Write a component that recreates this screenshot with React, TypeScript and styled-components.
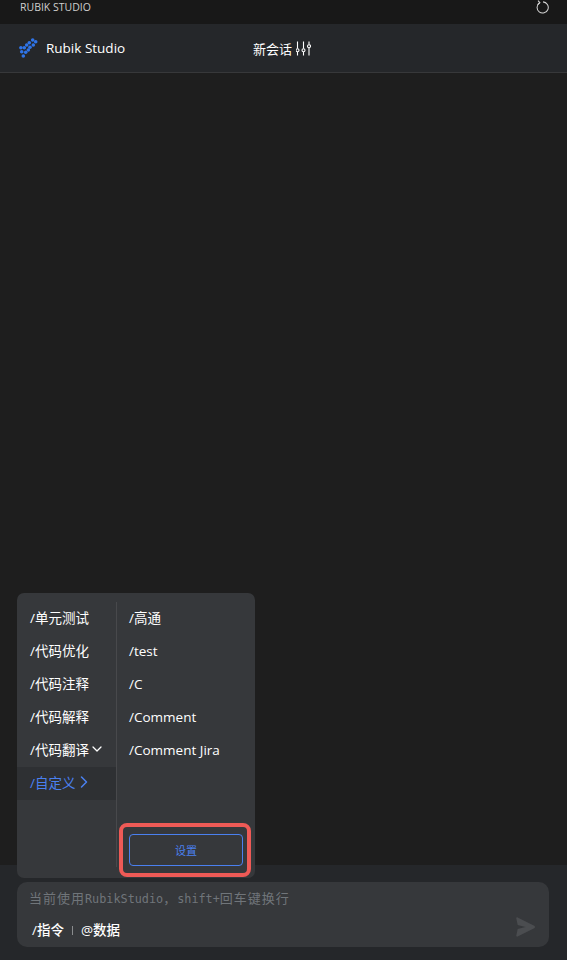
import { ChevronDown, ChevronRight } from "lucide-react";
import styled, { createGlobalStyle } from "styled-components";

const GlobalStyle = createGlobalStyle`
  html, body {
    margin: 0;
    padding: 0;
    background: #1e1e1e;
  }
  * {
    box-sizing: border-box;
  }
`;

const Page = styled.div`
  position: relative;
  display: flex;
  flex-direction: column;
  height: 960px;
  background: #1e1e1e;
  color: #fff;
  font-family: "Open Sans", "Noto Sans CJK SC", sans-serif;
  overflow: hidden;
`;

const TitleBar = styled.div`
  display: flex;
  justify-content: space-between;
  align-items: center;
  height: 24px;
  flex-shrink: 0;
  padding: 0 17px 10px 20px;
  background: #181818;
  color: #cfcfcf;
  font-size: 10.5px;
`;

const Header = styled.header`
  display: flex;
  align-items: center;
  height: 49px;
  flex-shrink: 0;
  padding-left: 19px;
  background: #25272a;
  border-bottom: 1px solid #37383a;
`;

const Brand = styled.div`
  display: flex;
  align-items: center;
  gap: 8px;
  width: 234px;
  font-size: 13.5px;
  font-weight: 500;
`;

const NewChat = styled.div`
  display: flex;
  align-items: center;
  gap: 4px;
  font-size: 13px;
`;

const Main = styled.main`
  flex: 1;
`;

const Footer = styled.footer`
  height: 95px;
  flex-shrink: 0;
  padding: 17px 18px 13px 17px;
  background: #25272a;
`;

const InputBox = styled.div`
  display: flex;
  flex-direction: column;
  justify-content: space-between;
  height: 65px;
  padding: 7px 14px 10px 12px;
  background: #36383b;
  border-radius: 10px;
`;

const Placeholder = styled.div`
  color: #70757a;
  font-size: 13px;
  letter-spacing: 1px;
  line-height: 18px;
`;

const Mono = styled.span`
  font-family: "DejaVu Sans Mono", monospace;
  font-size: 11.8px;
  letter-spacing: 0;
`;

const Actions = styled.div`
  display: flex;
  align-items: center;
  justify-content: space-between;
  padding-left: 3px;
`;

const Commands = styled.div`
  display: flex;
  align-items: center;
  padding-top: 6px;
  font-size: 13.5px;
  font-weight: 500;
  line-height: 14px;
`;

const Separator = styled.span`
  width: 1px;
  height: 9px;
  margin: 0 8px;
  background: #8a8c8e;
`;

const Popover = styled.div`
  position: absolute;
  left: 17px;
  bottom: 82px;
  display: flex;
  width: 238px;
  height: 285px;
  padding-top: 9px;
  background: #36383b;
  border-radius: 7px;
`;

const LeftColumn = styled.div`
  display: flex;
  flex-direction: column;
  width: 100px;
  height: 265px;
  border-right: 1px solid #48494c;
`;

const RightColumn = styled.div`
  display: flex;
  flex-direction: column;
  flex: 1;
  height: 275px;
`;

const MenuItem = styled.div<{ $active?: boolean }>`
  display: flex;
  align-items: center;
  gap: 2px;
  height: 33px;
  flex-shrink: 0;
  padding: 0 0 3px 13px;
  font-size: 13.5px;
  background: ${(p) => (p.$active ? "#2e3033" : "transparent")};
  color: ${(p) => (p.$active ? "#4a80f0" : "#fff")};
`;

const CustomItem = styled(MenuItem)<{ $latin?: boolean }>`
  padding: 0 0 ${(p) => (p.$latin ? "1px" : "3px")} 12px;
`;

const DownIcon = styled(ChevronDown)`
  margin-left: -2px;
`;

const RightIcon = styled(ChevronRight)`
  margin-left: -3px;
`;

const Highlight = styled.div`
  display: flex;
  align-items: center;
  width: 132px;
  height: 54px;
  margin: auto 0 0 2px;
  padding-left: 6px;
  border: 4px solid #ee5a56;
  border-radius: 8px;
`;

const SettingsButton = styled.button`
  width: 114px;
  height: 32px;
  flex-shrink: 0;
  background: transparent;
  border: 1px solid #4a80f0;
  border-radius: 4px;
  color: #4a80f0;
  font-family: inherit;
  font-size: 11px;
`;

const leftItems = ["/单元测试", "/代码优化", "/代码注释", "/代码解释"];
const customItems = ["/test", "/C", "/Comment", "/Comment Jira"];

const logoDots = [
  [13.7, 2],
  [16.7, 3.7],
  [10.3, 4.7],
  [14.3, 7],
  [7.7, 7],
  [11, 9.3],
  [1.9, 9.7],
  [5.3, 9.7],
  [9.3, 12],
  [2.7, 13.7],
  [6.7, 14.3],
  [4.3, 18],
];

function Logo() {
  return (
    <svg width="19" height="21" viewBox="0 0 19 21" fill="#2f74e8">
      {logoDots.map(([cx, cy]) => (
        <circle key={`${cx}-${cy}`} cx={cx} cy={cy} r="1.8" />
      ))}
    </svg>
  );
}

function ReloadIcon() {
  return (
    <svg width="14" height="14" viewBox="0 0 15 15" fill="none" stroke="#d4d4d4" strokeWidth="1.1">
      <path d="M3.8 3a6 6 0 1 0 3.7-1" />
      <path d="M2.2 0.6l2 2.4-2.4 2" />
    </svg>
  );
}

function SlidersIcon() {
  return (
    <svg width="15" height="15" viewBox="0 0 15 15" fill="none" stroke="#fff" strokeWidth="1.1">
      <path d="M1.5 0.5v7M1.5 11v3.5M7.5 0.5v7M7.5 11v3.5M13 0.5v3M13 7v7.5" />
      <circle cx="1.5" cy="9.2" r="1.5" />
      <circle cx="7.5" cy="9.2" r="1.5" />
      <circle cx="13" cy="5.2" r="1.5" />
    </svg>
  );
}

function SendIcon() {
  return (
    <svg width="19" height="20" viewBox="0 0 19 20" fill="#4b4d50">
      <path d="M1.6 0.5 18.2 8.7c1 .5 1 2 0 2.5L1.6 19.5c-.8.4-1.5-.2-1.3-1l1.4-6.6 7.8-1.9-7.8-1.9L.3 1.5C.1.7.8.1 1.6.5Z" />
    </svg>
  );
}

export default function App() {
  return (
    <Page>
      <GlobalStyle />
      <TitleBar>
        <span>RUBIK STUDIO</span>
        <ReloadIcon />
      </TitleBar>
      <Header>
        <Brand>
          <Logo />
          Rubik Studio
        </Brand>
        <NewChat>
          新会话
          <SlidersIcon />
        </NewChat>
      </Header>
      <Main />
      <Footer>
        <InputBox>
          <Placeholder>
            当前使用<Mono>RubikStudio</Mono>，<Mono>shift+</Mono>回车键换行
          </Placeholder>
          <Actions>
            <Commands>
              /指令
              <Separator />
              @数据
            </Commands>
            <SendIcon />
          </Actions>
        </InputBox>
      </Footer>
      <Popover>
        <LeftColumn>
          {leftItems.map((item) => (
            <MenuItem key={item}>{item}</MenuItem>
          ))}
          <MenuItem>
            /代码翻译
            <DownIcon size={16} strokeWidth={1.9} />
          </MenuItem>
          <MenuItem $active>
            /自定义
            <RightIcon size={20} strokeWidth={1.8} />
          </MenuItem>
        </LeftColumn>
        <RightColumn>
          <CustomItem>/高通</CustomItem>
          {customItems.map((item) => (
            <CustomItem key={item} $latin>
              {item}
            </CustomItem>
          ))}
          <Highlight>
            <SettingsButton>设置</SettingsButton>
          </Highlight>
        </RightColumn>
      </Popover>
    </Page>
  );
}
